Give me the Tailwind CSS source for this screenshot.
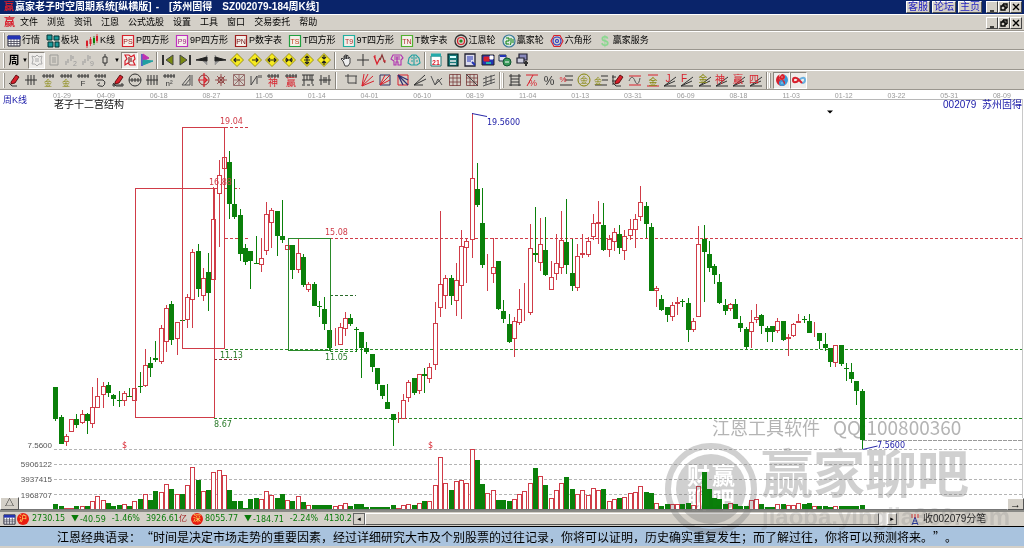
<!DOCTYPE html>
<html lang="zh-CN">
<head>
    <meta charset="UTF-8">
    <meta name="viewport" content="width=device-width, initial-scale=1.0">
    <title>赢家老子时空周期系统</title>
    <script src="https://cdn.jsdelivr.net/npm/@tailwindcss/browser@4"></script>
</head>
<body class="min-h-screen bg-[#d4d0c8] font-['Liberation_Sans','Noto_Sans_CJK_SC',sans-serif] text-[9px] leading-none text-black">
<div class="relative flex flex-col">

    <!-- Title bar -->
    <header class="flex h-[14px] items-center bg-[#0a246a] pl-1 pr-0.5 text-white">
        <span class="text-[10px] font-bold text-[#d81e2c]">赢</span>
        <h1 class="ml-px flex gap-1 whitespace-pre text-[10px] font-bold">
            <span>赢家老子时空周期系统[纵横版]</span><span>-</span>
            <span class="ml-1.5">[苏州固得</span><span class="ml-1.5">SZ002079-184周K线]</span>
        </h1>
        <nav class="ml-auto mr-1 flex gap-0.5 text-[10px] text-[#1c1cc0]">
            <a href="#" class="border border-white border-b-[#555] border-r-[#555] bg-[#d4d0c8] px-px">客服</a>
            <a href="#" class="border border-white border-b-[#555] border-r-[#555] bg-[#d4d0c8] px-px">论坛</a>
            <a href="#" class="border border-white border-b-[#555] border-r-[#555] bg-[#d4d0c8] px-px">主页</a>
        </nav>
        <div class="win flex"></div>
    </header>

    <!-- Menu -->
    <nav class="flex h-[17px] items-center gap-[9px] border-b border-[#9a968e] border-t border-t-white pl-1 pr-0.5">
        <span class="-mr-1 text-[11px] font-bold text-[#d81e2c]">赢</span>
        <a href="#">文件</a><a href="#">浏览</a><a href="#">资讯</a><a href="#">江恩</a><a href="#">公式选股</a>
        <a href="#">设置</a><a href="#">工具</a><a href="#">窗口</a><a href="#">交易委托</a><a href="#">帮助</a>
        <div class="win ml-auto flex"></div>
    </nav>

    <!-- Toolbars -->
    <div id="bar1" class="flex h-[19px] items-center gap-[6px] border-b border-[#9a968e] border-t border-t-white pl-[3px]"></div>
    <div id="bar2" class="flex h-5 items-center border-b border-[#9a968e] border-t border-t-white pl-[3px]"></div>
    <div id="bar3" class="flex h-5 items-center border-b border-[#9a968e] border-t border-t-white pl-[3px]"></div>

    <!-- Chart -->
    <main class="relative bg-white">
        <svg id="chart" viewBox="0 90 1024 420" class="block h-auto w-full"></svg>
        <button class="absolute bottom-0 left-0 h-[13px] w-[19px] border border-white border-b-[#555] border-r-[#555] bg-[#d4d0c8]">△</button>
        <button class="absolute bottom-0 right-0 h-[12px] w-[17px] border border-white border-b-[#555] border-r-[#555] bg-[#d4d0c8] text-[11px] leading-[8px]">→</button>
    </main>

    <!-- Status bar -->
    <footer class="flex h-[17px] items-center border-b border-black border-t-2 border-t-[#8a8a86] pl-[3px] font-['DejaVu_Sans','Noto_Sans_CJK_SC',sans-serif] text-[8px] text-[#0a7a0a]">
        <svg viewBox="0 0 14 14" class="size-[13px]"><path d="M1 2h12v10H1z" fill="#fff" stroke="#223"/><path d="M1 2h12v3H1z" fill="#2434b4"/><path d="M1 7.5h12M1 9.5h12M4 5v7M7 5v7M10 5v7" stroke="#445" stroke-width=".8"/></svg>
        <span class="ml-px flex size-[12px] items-center justify-center rounded-full bg-[#e81c10] text-[8px] text-[#ffe860]">沪</span>
        <div class="ml-[3px] flex w-[155px] items-center justify-between"><span>2730.15</span><span><i class="mr-px inline-block h-[7px] w-[8px] bg-[#0a7a0a] [clip-path:polygon(0_0,100%_0,50%_100%)]"></i>-40.59</span><span>-1.46%</span><span>3926.61<b class="font-normal text-[#a02020]">亿</b></span></div>
        <span class="ml-1 flex size-[12px] items-center justify-center rounded-full bg-[#e81c10] text-[8px] text-[#ffe860]">深</span>
        <div class="ml-0.5 flex w-[147px] items-center justify-between"><span>8055.77</span><span><i class="mr-px inline-block h-[7px] w-[8px] bg-[#0a7a0a] [clip-path:polygon(0_0,100%_0,50%_100%)]"></i>-184.71</span><span>-2.24%</span><span>4130.2</span></div>
        <div class="ml-px flex h-[12px] grow">
            <button class="w-[12px] border border-[#666] bg-[#d4d0c8] text-[7px] leading-none text-black" aria-label="左移">◂</button>
            <div class="grow border border-[#555] border-l-white border-t-white bg-[#d4d0c8]"></div>
            <div class="w-2 bg-[#eceae6]"></div>
            <button class="w-[10px] border border-white border-b-[#555] border-r-[#555] bg-[#d4d0c8] text-[7px] leading-none text-black" aria-label="右移">▸</button>
        </div>
        <div class="ml-[13px] flex w-[114px] items-center gap-[3px] text-[10px] text-[#222]">
            <svg viewBox="0 0 10 13" class="h-[13px] w-[10px]" fill="none" stroke="#2a3a9a"><path d="M5 4L2 12M5 4l3 8M3.500 8h3M2.500 10.500h5"/><path d="M2 1v4M8 1v4M5 1v4" stroke="#d03030"/></svg>
            <span class="font-['Liberation_Sans','Noto_Sans_CJK_SC',sans-serif] text-[10px]">收002079分笔</span>
        </div>
    </footer>

    <p class="h-[19px] whitespace-nowrap bg-[#a9c3de] pl-[57px] font-['Noto_Sans_CJK_SC',sans-serif] text-[12px] leading-[20px] [text-spacing-trim:space-all]">江恩经典语录：“时间是决定市场走势的重要因素，经过详细研究大市及个别股票的过往记录，你将可以证明，历史确实重复发生；而了解过往，你将可以预测将来。”。</p>

    <!-- Watermark -->
    <svg viewBox="0 0 364 130" class="pointer-events-none absolute bottom-0 right-0 w-[364px] mix-blend-darken" fill="#777" font-family="Noto Sans CJK SC, sans-serif">
        <g opacity=".34">
            <circle cx="51" cy="73" r="43" fill="none" stroke="#777" stroke-width="6"/>
            <circle cx="51" cy="73" r="35"/>
            <g fill="#fff" font-size="23" font-weight="700"><text x="27" y="68">财</text><text x="52" y="68">赢</text><text x="27" y="92">聊</text><text x="52" y="92">吧</text></g>
            <text x="101" y="77" font-size="52" font-weight="700">赢家聊吧</text>
            <text x="102" y="109" font-size="24" font-weight="700" font-family="Liberation Sans" opacity=".6">jiaoba.yingjia360.com</text>
        </g>
        <g opacity=".55"><text x="52" y="19" font-size="18">江恩工具软件</text><text x="173" y="19" font-size="19">QQ:100800360</text></g>
    </svg>
</div>

<script>
const R = "#d8202c", G = "#0a800a", K = "#333", Y = "#87870c";
const p = (d, c = K, w = 1, f = "none") => `<path d="${d}" stroke="${c}" stroke-width="${w}" fill="${f}"/>`;
const t = (s, c = K, size = 8, x = 7, y = 13) => `<text x="${x}" y="${y}" fill="${c}" font-size="${size}" text-anchor="middle">${s}</text>`;
const svg = body => `<svg viewBox="0 0 14 14" class="size-[14px] shrink-0">${body}</svg>`;
const comb = p("M1 3h12M3 1v4M6 1v4M9 1v4M12 1v4");
const fan = p("M1 13L13 4M1 13h12M1 13l11-5");
const tag = (s, c, tc) => p("M1.500 1.500h11v11h-11z", c, 1.2, "#f4efe9") + `<text x="7" y="10" fill="${tc}" font-size="7" text-anchor="middle">${s}</text>`;
const diamond = d => p("M7 .5L13.500 7 7 13.500.5 7z", "#8a8200", .8, "#f6ea20") + p(d, "#222", 1.2);
const grid = p("M1.500 1.500h11v11h-11zM5 1v12M9 1v12M1 5h12M1 9h12", "#7a3a3a", .8);
const pen = p("M4 9l5-7 3 2-4 6-4 1z", "#400", .8, R) + p("M2 10l3 3 5 0", K, 1);

const icon = {
    table: p("M1 2h12v10H1z", "#223", 1, "#fff") + p("M1 2h12v3H1z", "#2434b4", 1, "#2434b4") + p("M1 7.500h12M1 9.500h12M4 5v7M7 5v7M10 5v7", "#445", .8),
    blocks: p("M1 1h5v5H1zM8 2h5v4H8zM2 8h5v5H2zM9 8h4v5H9z", "#033", 1, "#1a9a9a"),
    kline: p("M2 7v5M5.500 5v5", R, 2) + p("M2 6v8M5.500 3v9", R, .8) + p("M9 4v5", G, 2) + p("M9 2v9", G, .8) + p("M12 2v5", R, 2) + p("M12 0v9", R, .8),
    gann: p("M7 1a6 6 0 110 12A6 6 0 017 1z", "#333", 1.3) + p("M7 3.500a3.500 3.500 0 110 7 3.500 3.500 0 010-7z", R, 1.2) + p("M7 6a1 1 0 110 2 1 1 0 010-2z", G, 1.2),
    win: p("M7 1a6 6 0 110 12A6 6 0 017 1z", "#3a7a9a", 1.2, "#dbe9e2") + p("M4 4h3v3H4v3h3M9 4v5l-1 2M11 5v4", G, 1),
    hex: p("M4 1.500h6L13 7l-3 5.500H4L1 7z", R, 1.1) + p("M7 3a4 4 0 110 8 4 4 0 010-8zM7 5.500a1.500 1.500 0 110 3 1.500 1.500 0 010-3z", "#2434c4", 1.1),
    dollar: `<text x="7" y="12" fill="#8ad890" font-size="14" font-weight="700" text-anchor="middle">$</text>`,
    week: `<text x="7" y="11" fill="#000" font-size="11" font-weight="700" text-anchor="middle">周</text>`,
    sketch: p("M2 3l3 1 2-2 2 2 3-1-1 4 1 4-3 0-2 2-2-2-3 0 1-4zM5 6h4M5 8h4", "#aaa"),
    note: p("M3 2h8v10H3zM5 5h4M5 7h4M5 9h4", "#9b9b97"),
    bars2: p("M2 12V8M4 10V6M7 8V2M9 6V3", "#999") + t("2", "#999", 7, 11),
    bars9: p("M2 12V8M4 10V6M7 8V2M9 6V3", "#999") + t("9", "#999", 7, 11),
    candle: p("M7 1v3M7 10v3", K) + p("M5 4h4v6H5z", K),
    red: p("M2 2h4l2 2 3-2 1 4-2 2 2 4H7l-2-2-3 2V8l2-2z", R, 1.2) + p("M6 4v6M8 5v4", "#600"),
    flag: p("M2 1v12", "#2434c4", 1.4) + p("M3 1l6 4-6 3z", "#c030b0", 1, "#c030b0") + p("M3 7l10 1-10 4z", "#20a0a0", 1, "#20a0a0"),
    first: p("M2 2v10", "#333", 2) + p("M12 2v10L5 7z", "#444", 1, "#7a8a10"),
    last: p("M12 2v10", "#333", 2) + p("M2 2v10l7-5z", "#444", 1, "#7a8a10"),
    prev: p("M12 2v10L8 8z", "#888", .5, "#999") + p("M12 4v4L1 7z", "#222", 1, "#222"),
    next: p("M2 2v10l4-4z", "#888", .5, "#999") + p("M2 4v4l11-1z", "#222", 1, "#222"),
    d1: diamond("M10 7H4M6 5L4 7l2 2"), d2: diamond("M4 7h6M8 5l2 2-2 2"),
    d3: diamond("M3 7h8M5 5L3 7l2 2M9 5l2 2-2 2"), d4: diamond("M3 7h8M4 5l2 2-2 2M10 5L8 7l2 2"),
    d5: diamond("M7 3v8M4 7h6M5 5l2-2 2 2M5 9l2 2 2-2"), d6: diamond("M7 2v4M7 12V8M5 4l2 2 2-2M5 10l2-2 2 2"),
    hand: p("M4 8L2 6l1-1 2 2V3h1v3-4h1.500v4-3.500H9V6l1-2 1 1v5l-2 3H6z", K, .9, "#eee"),
    cross: p("M7 1v12M1 7h12"),
    wave: p("M1 3l3 8 3-6", R, 1.3) + p("M7 7l2-5 3 8", "#833", 1.2) + p("M2 2v3M10 8h3", R),
    brainP: p("M3 2h8l2 3-2 2v5H8V9H6v3H4V8L1 6zM4 4h6M7 4v5M4 6h6", "#b030b0", 1.1),
    brainC: p("M5 2h4l3 3 1 5-3 2H4l-3-2 1-5zM7 2v10M4 5h2M4 8h2M8 5h2M9 8h2", "#20a0a0", 1.1),
    cal: p("M2 3h10v10H2z", "#277", 1, "#fff") + p("M2 2h10", "#2aa", 3) + `<text x="7" y="11.500" fill="${R}" font-size="7" font-weight="700" text-anchor="middle">21</text>`,
    calc: p("M2 1h10v12H2z", "#022", 1.2, "#187a7a") + p("M4 4h6", "#d8ffff", 2) + p("M4 8h6M4 11h6", "#eee", 1.4),
    doc: p("M2 1h10v12H2z", "#223", 1.3, "#dde") + p("M4 4h6M4 6h6M4 8h4", "#2434b4") + p("M9 9l3 3", "#2434b4", 2),
    disk: p("M1 2h12v10H1z", "#222", 1, "#2434b4") + p("M3 4h5v4H3z", R, 1, R) + p("M9 3h3v3H9z", "#fff", 1, "#fff") + p("M5 10h5", "#20b0b0", 2),
    link: p("M1 2h7v6H1z", "#234", 1, "#dde") + p("M2 3h6", "#2434b4", 2) + p("M9 5a4 4 0 110 8 4 4 0 010-8z", "#153", 1, "#3a9a5a") + p("M7 9h4", "#fff"),
    pc: p("M4 1h8v6H4z", "#223", 1.2, "#88b") + p("M2 5h7v5H2z", "#223", 1.2, "#ccd") + p("M9 10h4M11 8v5", "#333", 2),
    pen, fence: p("M1 7h12M4 2v10M7 2v10M10 2v10"), gold: comb + t("金", Y), gold2: comb + t("金", Y),
    f: comb + t("F"), swirl: comb + p("M3 7h7a3 3 0 01-3 6c-3 0-3-3 0-3"), penR: pen + p("M1 12h12M3 10v4M11 10v4"),
    circ: p("M7 1a6 6 0 110 12A6 6 0 017 1zM1 7h12M4 5v4M7 5v4M10 5v4"), four: p("M1 7h12M3 2v10M6 2v10M9 2v10M12 2v10"),
    n2: comb + t("n²"), tri: p("M2 12L10 2v10zM5 12l5-6M12 2v11", "#555"),
    target: p("M7 2a5 5 0 110 10A5 5 0 017 2z", "#8a3030") + p("M7 0v14M1 7h10M7 4l3 3-3 3", R, 1.2),
    star: p("M7 1v12M1 7h12M3 3l8 8M11 3l-8 8", "#833", .8) + p("M7 4a3 3 0 110 6 3 3 0 010-6z", "#833", .8),
    starSq: p("M1.500 1.500h11v11h-11zM2 2l10 10M12 2L2 12M7 2v10M2 7h10", "#855", .8),
    zig: p("M2 12V3M2 12L8 3v8M10 2v3M12 2v3", "#444"), shen: comb + t("神", R, 10), ying: comb + t("赢", R, 10),
    film: p("M1 2h12M1 7h12M3 2v9M6 2v5M9 2v5M11 2v9M1 12h3M6 12h3M11 12h2"), gap: p("M3 2v10M11 2v10M6 4v6M8 4v6M1 7h12"),
    crop: p("M4 1v9M1 3h12M4 10h8M12 3v8", "#444"), fanR: p("M1 13L13 8M1 13L12 3M1 13L7 1M1 13L3 1", R),
    boxR: p("M2 2h10v10H2z", "#303060") + p("M2 12L12 2M2 12L7 2M2 12l10-5", R), boxB: p("M2 2h10v10H2z", R) + p("M2 2l10 10M2 2l5 10M2 2l10 5", "#303070", 1.3),
    lines: p("M1 12L12 2M1 12l12-6M1 12h9"), vee: p("M1 3l4 9 3-6 4 6M5 12l7-7", "#555"), grid, gridB: grid + p("M1 1l12 12", "#444"),
    slant: p("M1 6l12-4M1 10l12-4M1 13l12-4M4 3v9M9 2v9", "#555"),
    scale: p("M3 1v12M11 1v12M1 3h12M3 6h8M3 9h8M1 12h12"), pctT: p("M1 2h12M2 13L8 2", R) + t("%", R, 9, 8),
    pct: t("%", K, 12, 7, 12), pctL: p("M6 3h8M6 7h8M1 12h12") + t("%", R, 8, 4, 9),
    coin: p("M7 1a6 6 0 110 12A6 6 0 017 1z", Y) + t("金", Y, 8, 7, 10), goldL: p("M7 3h7M8 7h6M1 12h12") + t("金", Y, 8, 4, 11),
    penI: p("M2 2v10M1 4h4M1 8h4") + pen, curve: p("M1 3h12M1 12h12", R) + p("M1 8c2-5 4-5 6 0s4 3 5-3", "#555"),
    goldR: p("M2 2h10M1 13h12", R) + t("金", Y, 9, 7, 12), j: fan + t("J", R, 10, 5, 9), fF: fan + t("F", R, 10, 4, 9), fg: fan + t("金", Y, 9, 5, 9), fs: fan + t("神", R, 10, 5, 10),
    fy: fan + t("赢", R, 10, 6, 10), f4: fan + t("四", R, 10, 5, 10),
    yin: p("M7 1a6 6 0 010 12 3 3 0 010-6 3 3 0 000-6z", "none", 0, "#3a9ad8") + p("M7 1a6 6 0 000 12 3 3 0 000-6 3 3 0 010-6z", "none", 0, R) + p("M7 7a3 3 0 000 6 6 6 0 003-1z", "none", 0, "#3a9ad8") + p("M7 1a3 3 0 010 6 3 3 0 01-3-3z", "none", 0, R) + p("M7 3.500v1M7 9.500v1", "#fff", 1),
    inf: p("M7 7C5 4 1 4 1 7s3 3 6 0", R, 2) + p("M7 7c3-3 6-3 6 0s-2 3-3 3", "#6ab0e0", 2) + p("M6 6l4 4", R, 2),
};

const grip = `<i class="mr-[2px] h-[15px] w-[2px] border-l border-white bg-[#9a968e]"></i>`;
const sep = `<i class="mx-px h-[17px] w-[2px] border-l border-[#8a867e] bg-white"></i>`;
const btn = (n, cls = "") => `<button class="flex h-[17px] items-center justify-center ${cls}" aria-label="${n}">${svg(icon[n])}</button>`;
const on = "border border-[#8a867e] border-b-white border-r-white bg-[#efedea]";
const drop = `<button class="flex h-[17px] w-[8px] items-center justify-center text-[6px]" aria-label="展开">▼</button>`;
const group = (w, names, cls) => `<div class="grid auto-cols-fr grid-flow-col ${w}">${names.split(" ").map(n => btn(n, cls)).join("")}</div>`;

// Named tools
document.getElementById("bar1").innerHTML = `<i class="-mr-1 h-[15px] w-[2px] border-l border-white bg-[#9a968e]"></i>` + [
    [icon.table, "行情"], [icon.blocks, "板块"], [icon.kline, "K线"],
    [tag("PS", R, "#a02020"), "P四方形"], [tag("P9", "#c030c0", "#a02080"), "9P四方形"], [tag("PN", "#a02020", "#701010"), "P数字表"],
    [tag("TS", "#20a040", "#c04020"), "T四方形"], [tag("T9", "#20b0a0", "#b03030"), "9T四方形"], [tag("TN", "#50b030", "#b03030"), "T数字表"],
    [icon.gann, "江恩轮"], [icon.win, "赢家轮"], [icon.hex, "六角形"], [icon.dollar, "赢家服务"],
].map(([i, s]) => `<button class="flex items-center gap-px whitespace-nowrap">${svg(i)}${s}</button>`).join("");

document.getElementById("bar2").innerHTML = grip.replace("mr-[2px]", "mr-0")
    + btn("week", "w-[17px]") + `<button class="w-[6px] text-[6px]" aria-label="展开">▼</button>` + btn("sketch", "w-[17px] " + on) + btn("note", "w-[17px]") + btn("bars2", "w-[17px]") + btn("bars9", "w-[17px]")
    + btn("candle", "w-[17px]") + drop + btn("red", "w-[17px] " + on) + btn("flag", "w-[17px]") + sep
    + group("w-[174px]", "first last prev next d1 d2 d3 d4 d5 d6") + sep + group("w-[86px]", "hand cross wave brainP brainC") + sep
    + group("w-[104px]", "cal calc doc disk link pc");

document.getElementById("bar3").innerHTML = grip.replace("mr-[2px]", "mr-0")
    + group("w-[329px]", "pen fence gold gold2 f swirl penR circ four n2 tri target star starSq zig shen ying film gap") + sep
    + `<i class="w-1"></i>` + group("w-[156px]", "crop fanR boxR boxB lines vee grid gridB slant") + sep + grip
    + group("w-[259px]", "scale pctT pct pctL coin goldL penI curve goldR j fF fg fs fy f4") + sep + grip
    + group("w-[34px]", "yin inf", on);

document.querySelectorAll(".win").forEach(el => {
    el.innerHTML = ["M3 9h4", "M4 2h4v4M2 4h4v4H2zM4 2v2M6 6h2", "M2 2l6 6M8 2l-6 6"].map((d, i) =>
        `<button class="h-[12px] w-[12px] border border-white border-b-[#444] border-r-[#444] bg-[#d4d0c8]" aria-label="${["最小化", "还原", "关闭"][i]}"><svg viewBox="0 0 10 10" class="size-[10px]"><path d="${d}" stroke="#000" stroke-width="1.400" fill="none"/></svg></button>`).join("");
});

// Weekly bars: colour, high, body top, body bottom, low, volume top
const bars = `g387,387,419,421,504 g415,417,444,444,506 r434,436,442,446,508 r419,419,432,432,508 g414,419,425,428,506 r410,414,423,424,506
g413,414,421,434,506 r387,407,424,428,501 r378,396,408,408,496 r382,386,395,408,500 g382,385,393,397,503 g394,395,399,406,506 g391,400,401,407,505
r391,393,401,406,504 g388,396,397,397,506 r388,388,401,401,501 g372,386,387,393,499 r349,365,386,387,494 g357,363,368,377,500 g341,358,360,362,491
r325,328,362,364,492 r305,308,342,352,484 g301,304,340,345,489 r322,322,339,355,494 g320,320,321,321,494 r294,297,320,328,485 r249,252,300,328,467
g244,251,289,297,480 r268,278,296,301,491 g253,272,293,311,490 r187,219,280,280,472 r160,175,194,247,470 r152,157,169,175,475 g151,162,204,219,490
g179,204,217,219,501 g209,215,254,261,501 g244,248,262,265,508 g251,251,261,289,499 g236,263,264,264,498 r238,258,265,272,499 r202,214,251,255,491
r208,210,223,248,495 g211,211,236,256,498 g200,236,240,243,494 r245,245,250,250,500 g245,245,270,279,501 r239,253,270,273,496 g254,257,285,287,502
r282,284,290,292,505 g282,284,306,306,505 g301,306,307,317,505 g297,309,324,330,505 g330,330,348,351,505 r328,342,343,346,506 r323,327,345,345,505
r312,318,329,336,503 g314,318,324,326,506 g327,329,330,352,504 g332,332,348,378,504 g342,348,352,354,507 g354,354,367,372,507 g368,368,384,390,507
g385,385,396,399,507 g384,402,409,409,507 g414,414,420,446,505 r412,420,421,423,508 r394,400,419,419,505 r380,382,398,402,504 g378,378,393,395,505
r374,374,391,394,503 g368,374,376,393,501 r363,367,379,383,501 r302,323,365,370,485 r211,284,308,317,457 r275,278,296,309,483 g275,278,296,305,490
r263,280,301,316,481 r230,246,286,319,480 r239,241,248,283,483 r113,178,240,258,449 g163,189,205,207,460 g188,223,265,268,484 r254,273,274,291,493
r238,267,274,283,490 g261,261,309,310,500 g300,311,319,323,500 g314,324,342,343,501 r317,321,339,357,499 r289,309,323,325,494 r283,310,311,321,491
r224,248,313,315,483 g207,253,255,262,468 r218,244,263,271,476 g217,250,275,276,485 r261,277,290,290,498 r234,263,274,280,490 r211,240,268,274,483
g199,242,265,274,477 g239,273,286,291,489 r244,256,288,291,494 r234,253,255,258,490 r237,241,255,257,495 r214,223,237,240,488 r201,222,224,244,490
g203,225,250,251,489 r235,239,250,257,501 r228,232,242,251,499 g225,234,248,254,498 r230,236,251,260,497 r219,229,236,240,493 r214,219,230,248,492
r186,202,217,221,486 g202,206,224,238,492 g223,227,291,291,493 r286,288,291,307,503 g295,299,310,311,506 g307,307,315,322,504 r302,305,317,321,504
r297,302,304,315,504 g299,301,302,307,504 g298,303,330,342,503 r318,321,330,332,505 r226,244,317,317,486 g225,239,252,302,472 g241,254,268,272,489
g264,266,275,284,498 g274,282,303,304,499 g299,305,311,315,504 r303,304,309,311,503 g299,304,319,319,504 g316,323,328,332,506 g327,329,347,349,506
r310,322,332,348,500 r304,317,320,323,499 g314,315,326,334,504 g326,328,332,342,507 g326,326,332,342,507 r318,321,331,333,504 g321,321,340,341,504
r334,337,339,356,505 r323,324,336,337,505 r314,321,323,323,503 g316,319,320,323,504 g314,321,333,333,503 r322,333,334,337,506 g333,333,341,349,506
g333,344,348,351,506 g348,348,362,367,507 r345,345,363,367,506 g345,345,364,366,506 g363,368,369,381,506 g363,372,379,383,506 g381,381,391,405,506
g389,391,440,449,505`.split(/\s+/);

const CR = "#d03c48";
const line = (x1, y1, x2, y2, c, dash = "") => `<line x1="${x1}" y1="${y1}" x2="${x2}" y2="${y2}" stroke="${c}" stroke-dasharray="${dash}"/>`;
const label = (x, y, s, c, size = 8, anchor = "start", font = "DejaVu Sans") => `<text x="${x}" y="${y}" fill="${c}" font-size="${size}" text-anchor="${anchor}" font-family="${font}, Noto Sans CJK SC, sans-serif">${s}</text>`;
let out = line(54, 99.5, 1023, 99.5, "#b8b8b8") + line(1022.5, 99, 1022.5, 510, "#c8c8c8");

"01-29 04-09 06-18 08-27 11-05 01-14 04-01 06-10 08-19 11-04 01-13 03-31 06-09 08-18 11-03 01-12 03-22 05-31 08-09".split(" ").forEach((d, i) => {
    out += label(i ? 106 + (i - 1) * 52.7 : 62, 98, d, "#999", 7, "middle", "Liberation Sans");
});
[449.5, 464.5, 479.5, 494.5].forEach(y => out += line(54, y, 1022, y, "#b4b4b4", "3 2"));
out += line(863, 440.5, 1022, 440.5, "#999", "4 1")
    + line(330, 238.5, 1022, 238.5, CR, "3 2") + line(225, 238.5, 250, 238.5, CR, "3 2")
    + line(225, 127.5, 250, 127.5, CR, "3 2") + line(214, 188.5, 240, 188.5, CR, "3 2") + line(214, 359.5, 240, 359.5, "#8a3038", "3 2")
    + line(225, 349.5, 1022, 349.5, "#2a8a2a", "3 2") + line(214, 418.5, 1022, 418.5, "#2a8a2a", "3 2")
    + line(330, 295.5, 356, 295.5, "#2a6a2a", "3 2") + line(330, 351.5, 356, 351.5, "#2a8a2a", "3 2");

bars.forEach((b, i) => {
    const [hi, top, bot, lo, vol] = b.slice(1).split(",").map(Number);
    const x = Math.floor(55.8 + i * 5.27) + .5;
    if (b[0] === "g") {
        out += line(x, hi, x, lo, G) + `<rect x="${x - 2.5}" y="${top}" width="5" height="${bot - top}" fill="${G}"/>`
            + `<rect x="${x - 2.5}" y="${vol}" width="5" height="${510 - vol}" fill="${G}"/>`;
    } else {
        const h = Math.max(bot - top - 1, 0);
        out += line(x, hi, x, lo, CR) + `<rect x="${x - 2}" y="${top + .5}" width="4" height="${h}" fill="#fff" stroke="${CR}"/>`
            + `<rect x="${x - 2}" y="${vol + .5}" width="4" height="${509 - vol}" fill="#fff" stroke="${CR}"/>`;
    }
});

// Cycle boxes
out += `<g fill="none"><rect x="182.500" y="127.500" width="42" height="221" stroke="${CR}"/><rect x="135.500" y="188.500" width="79" height="229" stroke="${CR}"/><rect x="288.500" y="238.500" width="42" height="112" stroke="#2a8a2a"/></g>`;
out += `<path d="M472 113.500l15 3M862.500 449.500l15-3.500" stroke="#2828a8"/><path d="M827 110.500h6l-3 3z"/>` + line(0, 509.5, 1024, 509.5, "#777")
    + label(220, 124, "19.04", CR) + label(209, 185, "16.88", CR) + label(325, 235, "15.08", CR)
    + label(220, 358, "11.13", "#2a7a2a") + label(325, 360, "11.05", "#2a7a2a") + label(214, 427, "8.67", "#2a7a2a")
    + label(487, 125, "19.5600", "#2020a8") + label(877, 448, "7.5600", "#2020a8")
    + label(122, 448, "$", R) + label(428, 448, "$", R)
    + [["7.5600", 448], ["5906122", 467], ["3937415", 482], ["1968707", 498]].map(([s, y]) => label(52, y, s, "#555", 8, "end", "Liberation Sans")).join("")
    + label(3, 103, "周K线", "#1818a8", 9, "start", "Liberation Sans") + label(54, 108, "老子十二宫结构", "#111", 10)
    + label(1022, 108, "002079&#160; 苏州固得", "#1818a8", 10, "end", "Liberation Sans");
document.getElementById("chart").innerHTML = out;
</script>
</body>
</html>
